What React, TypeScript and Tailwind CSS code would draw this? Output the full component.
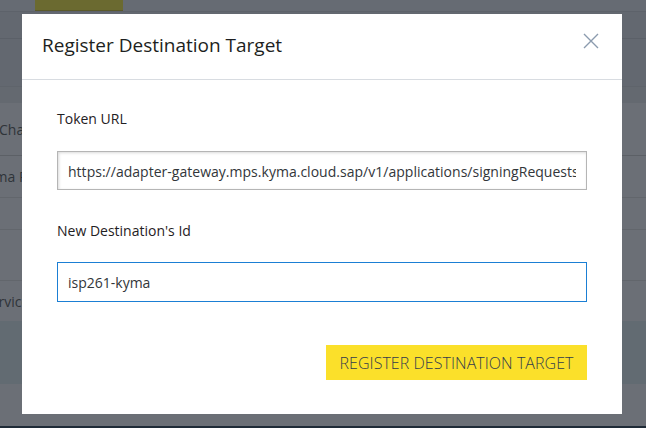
import React from 'react';

const font = { fontFamily: '"Open Sans", "Noto Sans", Arial, sans-serif' };

function Backdrop() {
  return (
    <div className="flex flex-col h-[428px] text-[14px] text-[#2f3439]" style={font}>
      {/* top header */}
      <div className="h-[12px] flex bg-[#666b73] border-b border-[#5d626a] shrink-0">
        <div className="ml-[35px] w-[88px] h-full bg-[#6b6a30] border-b border-[#5b5a2a]" />
      </div>
      <div className="h-[27px] bg-[#636870] border-b border-[#5b6068] shrink-0" />
      <div className="h-[48px] bg-[#636870] border-b border-[#5f646b] shrink-0" />
      <div className="h-[16px] bg-[#646970] shrink-0" />
      {/* table rows */}
      <div className="flex flex-col bg-[#6b6f76]">
        <div className="h-[53px] border-b border-[#5c6066] flex items-center overflow-hidden whitespace-nowrap">
          <span className="-ml-[1px]">Change</span>
        </div>
        <div className="h-[42px] border-b border-[#62666c] flex items-center overflow-hidden whitespace-nowrap">
          <span className="-ml-[21px]">Kyma Runtime</span>
        </div>
        <div className="h-[32px] border-b border-[#62666c]" />
        <div className="h-[51px] border-b border-[#62666c]" />
        <div className="h-[40px] flex items-center overflow-hidden whitespace-nowrap">
          <span className="-ml-[17px]">Service</span>
        </div>
      </div>
      <div className="h-[63px] bg-[#626b72] shrink-0" />
      <div className="flex-1 bg-[#6b6f76]" />
      <div className="h-[2px] bg-[#1f2b37] shrink-0" />
    </div>
  );
}

function CloseIcon() {
  return (
    <svg width="16" height="16" viewBox="0 0 16 16" fill="none" stroke="#8b9bae" strokeWidth="1.4">
      <path d="M1 1 L15 15 M15 1 L1 15" />
    </svg>
  );
}

export default function App() {
  return (
    <div className="relative w-[646px] h-[428px] overflow-hidden bg-[#6b6f76]">
      <Backdrop />

      {/* modal */}
      <div
        className="absolute left-[22px] top-[14px] w-[600px] h-[400px] bg-white flex flex-col text-[#32363a]"
        style={font}
      >
        <div className="h-[66px] shrink-0 flex items-center justify-between pl-[20px] pr-[23px] border-b border-[#d8dce1]">
          <h2 className="text-[19px] leading-[24px] text-[#1d1f21] -mt-[3px]">Register Destination Target</h2>
          <button className="-mt-[12px]">
            <CloseIcon />
          </button>
        </div>

        <div className="flex flex-col px-[35px] pt-[29px]">
          <label className="text-[14px] leading-[20px] text-[#1f2124]">Token URL</label>
          <div className="mt-[22px] h-[39px] border border-[#b5b5b5] shadow-[inset_1px_1px_3px_rgba(0,0,0,0.15)] flex items-center px-[10px]">
            <div className="overflow-hidden whitespace-nowrap w-full">
              <span className="text-[14px] text-[#32363a] tracking-[0.02px]">
                https://adapter-gateway.mps.kyma.cloud.sap/v1/applications/signingRequests/info
              </span>
            </div>
          </div>

          <label className="mt-[31px] text-[14px] leading-[20px] text-[#1f2124]">New Destination's Id</label>
          <div className="mt-[21px] h-[40px] border border-[#1b7fd4] flex items-center pl-[10px]">
            <span className="text-[14px] text-[#32363a]">isp261-kyma</span>
          </div>

          <div className="flex justify-end mt-[43px]">
            <button className="h-[35px] w-[261px] bg-[#fbe02a] text-[16px] font-light text-[#343c4c] uppercase tracking-[0.05px]">
              Register Destination Target
            </button>
          </div>
        </div>
      </div>
    </div>
  );
}
